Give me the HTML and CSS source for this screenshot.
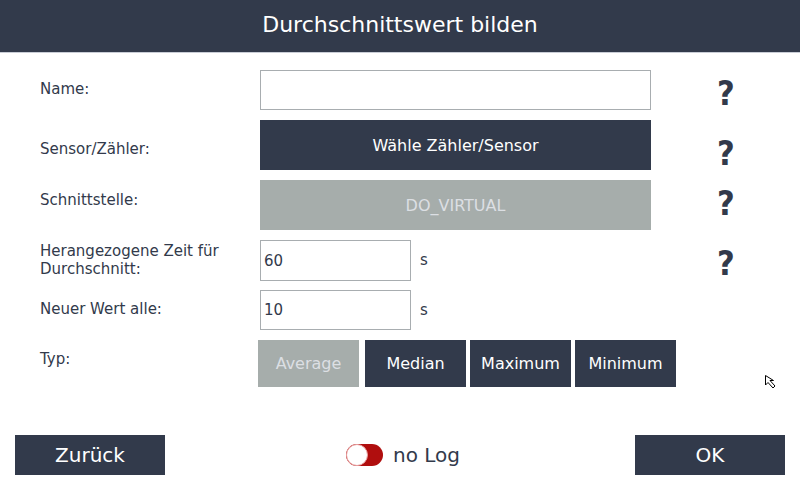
FILE: index.html
```html
<!DOCTYPE html>
<html>
<head>
<meta charset="utf-8">
<link rel="stylesheet" href="styles.css">
</head>
<body>
<header class="header">Durchschnittswert bilden</header>
<main class="form">
  <div class="label">Name:</div>
  <div class="field"><div class="input wide"></div></div>
  <div class="help">?</div>

  <div class="label l-sensor">Sensor/Zähler:</div>
  <div class="field"><div class="btn dark big">Wähle Zähler/Sensor</div></div>
  <div class="help h-sensor">?</div>

  <div class="label l-iface">Schnittstelle:</div>
  <div class="field"><div class="btn grey big">DO_VIRTUAL</div></div>
  <div class="help">?</div>

  <div class="label l-time">Herangezogene Zeit für<br>Durchschnitt:</div>
  <div class="field"><div class="input small tall">60</div><span class="unit">s</span></div>
  <div class="help">?</div>

  <div class="label">Neuer Wert alle:</div>
  <div class="field"><div class="input small">10</div><span class="unit">s</span></div>
  <div class="help"></div>

  <div class="label l-typ">Typ:</div>
  <div class="field types">
    <div class="btn grey type t-avg">Average</div>
    <div class="btn dark type">Median</div>
    <div class="btn dark type">Maximum</div>
    <div class="btn dark type">Minimum</div>
  </div>
  <div class="help"></div>
</main>
<footer class="footer">
  <div class="btn dark foot">Zurück</div>
  <div class="log"><span class="toggle"><span class="knob"></span></span>no Log</div>
  <div class="btn dark foot">OK</div>
</footer>
<svg class="cursor" width="14" height="16" viewBox="0 0 14 16"><path d="M0.5 0.5 L0.5 10 L3 7.5 L8 13 L10 11 L5 5.5 L8.5 5.5 Z" fill="#fff" stroke="#000" stroke-width="1"/></svg>
</body>
</html>
```
FILE: styles.css
```css
* { box-sizing: border-box; }
html, body { margin: 0; padding: 0; }
body {
  width: 800px; height: 480px; overflow: hidden;
  background: #fff;
  font-family: "DejaVu Sans", sans-serif;
  color: #323a4b;
  position: relative;
}
.header {
  height: 53px;
  background: #323a4b;
  border-bottom: 1px solid #c9cdd6;
  color: #fff;
  font-size: 22px;
  display: flex; align-items: center; justify-content: center;
  padding-bottom: 3px;
}
.form {
  display: grid;
  grid-template-columns: 220px 391px 140px;
  grid-template-rows: 40px 50px 50px 40px 40px 47px;
  row-gap: 10px;
  padding: 17px 0 0 40px;
}
.label {
  font-size: 15px;
  align-self: center;
  line-height: 17.5px;
}
.l-sensor { padding-top: 10px; }
.l-iface { padding-bottom: 8px; }
.l-typ { padding-bottom: 8px; }
.l-time { padding-top: 1px; }
.field { display: flex; align-items: center; }
.input {
  border: 1px solid #a8adb0;
  height: 100%;
  font-size: 15px;
  display: flex; align-items: center;
  padding-left: 3px;
  color: #323a4b;
  flex-shrink: 0;
}
.tall { height: 41px; align-self: flex-start; }
.wide { width: 391px; }
.small { width: 151px; }
.unit { font-size: 15px; margin-left: 9px; }
.btn {
  display: flex; align-items: center; justify-content: center;
  color: #fff;
  flex-shrink: 0;
}
.dark { background: #323a4b; }
.grey { background: #a6adab; color: #dcdfe3; }
.big { width: 391px; height: 100%; font-size: 16px; }
.types { margin-left: -2px; }
.type { width: 101px; height: 47px; font-size: 16px; margin-right: 4px; }
.t-avg { margin-right: 6px; }
.help {
  font-family: "DejaVu Sans Condensed", "DejaVu Sans", sans-serif;
  font-stretch: condensed;
  font-size: 34px; font-weight: bold;
  padding-left: 66px;
  padding-top: 6px;
  align-self: start;
  line-height: 1;
}
.h-sensor { padding-top: 16px; }
.footer {
  position: absolute; left: 15px; right: 15px; top: 435px;
  display: flex; justify-content: space-between; align-items: center;
}
.foot { width: 150px; height: 40px; font-size: 20px; }
.log { display: flex; align-items: center; font-size: 20px; gap: 10px; margin-left: 6px; }
.toggle {
  width: 37px; height: 22px; border-radius: 11px;
  background: #b00e0e; position: relative; display: inline-block;
}
.knob {
  position: absolute; left: 0; top: 0; width: 22px; height: 22px; border-radius: 50%;
  background: #fff; border: 1px solid #e8a0a0;
}
.cursor { position: absolute; left: 765px; top: 375px; }
```
